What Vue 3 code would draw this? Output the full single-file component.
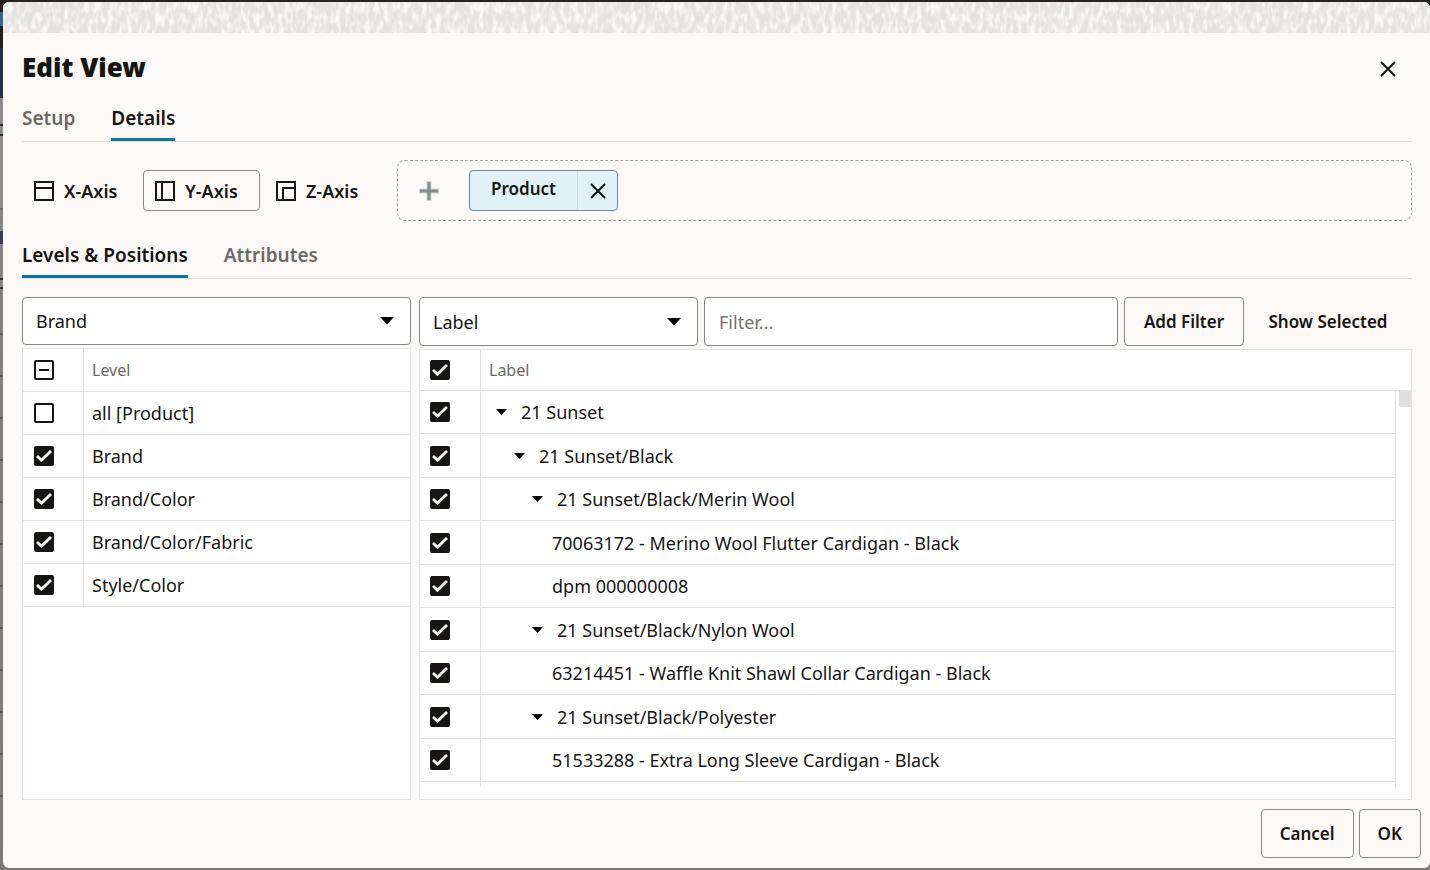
<script setup>
import { ref } from 'vue'

const levels = ref([
  { name: 'all [Product]', checked: false },
  { name: 'Brand', checked: true },
  { name: 'Brand/Color', checked: true },
  { name: 'Brand/Color/Fabric', checked: true },
  { name: 'Style/Color', checked: true }
])

const positions = ref([
  { name: '21 Sunset', kind: 'd1', checked: true },
  { name: '21 Sunset/Black', kind: 'd2', checked: true },
  { name: '21 Sunset/Black/Merin Wool', kind: 'd3', checked: true },
  { name: '70063172 - Merino Wool Flutter Cardigan - Black', kind: 'leaf', checked: true },
  { name: 'dpm 000000008', kind: 'leaf', checked: true },
  { name: '21 Sunset/Black/Nylon Wool', kind: 'd3', checked: true },
  { name: '63214451 - Waffle Knit Shawl Collar Cardigan - Black', kind: 'leaf', checked: true },
  { name: '21 Sunset/Black/Polyester', kind: 'd3', checked: true },
  { name: '51533288 - Extra Long Sleeve Cardigan - Black', kind: 'leaf', checked: true }
])

const axes = [
  { id: 'X', label: 'X-Axis', path: 'M1 1H19V19H1ZM1 7H19' },
  { id: 'Y', label: 'Y-Axis', path: 'M1 1H19V19H1ZM7 1V19' },
  { id: 'Z', label: 'Z-Axis', path: 'M1 1H19V19H1ZM7 19V7H19' }
]
const axis = ref('Y')
const allPositions = ref(true)
const filter = ref('')
</script>

<template>
  <div class="backdrop">
    <div class="dialog" role="dialog" aria-labelledby="dialog-title">
      <svg class="texture" aria-hidden="true">
        <filter id="weave" x="0" y="0" width="100%" height="100%">
          <feTurbulence type="fractalNoise" baseFrequency="0.21 0.09" numOctaves="2" seed="8" />
          <feColorMatrix values="0 0 0 0 1  0 0 0 0 1  0 0 0 0 0.99  3 0 0 0 -1.2" />
        </filter>
        <rect width="100%" height="100%" fill="#e4e3e1" />
        <rect width="100%" height="100%" filter="url(#weave)" opacity="0.75" />
      </svg>

      <div class="content">
        <header class="head">
          <h1 id="dialog-title">Edit View</h1>
          <button class="icon-btn" type="button" aria-label="Close">
            <svg width="16" height="16" viewBox="0 0 16 16"><path d="M1 1L15 15M15 1L1 15" /></svg>
          </button>
        </header>

        <nav class="tabs">
          <button class="tab" type="button">Setup</button>
          <button class="tab active" type="button">Details</button>
        </nav>

        <div class="axis-row">
          <div class="axes">
            <button
              v-for="a in axes"
              :key="a.id"
              type="button"
              class="axis"
              :class="{ selected: axis === a.id }"
              @click="axis = a.id"
            >
              <svg width="20" height="20" viewBox="0 0 20 20"><path :d="a.path" /></svg>
              <span>{{ a.label }}</span>
            </button>
          </div>
          <div class="drop">
            <button class="plus" type="button" aria-label="Add dimension">
              <svg width="20" height="20" viewBox="0 0 20 20">
                <path class="halo" d="M10 0V20M0 10H20" />
                <path d="M10 1V19M1 10H19" />
              </svg>
            </button>
            <div class="chip">
              <span class="chip-name">Product</span>
              <button class="chip-x" type="button" aria-label="Remove Product">
                <svg width="16" height="16" viewBox="0 0 16 16"><path d="M1 1L15 15M15 1L1 15" /></svg>
              </button>
            </div>
          </div>
        </div>

        <nav class="tabs sub">
          <button class="tab active" type="button">Levels &amp; Positions</button>
          <button class="tab" type="button">Attributes</button>
        </nav>

        <div class="panels">
          <section class="panel">
            <div class="select-wrap level-select">
              <select aria-label="Level"><option>Brand</option></select>
              <svg width="14" height="8" viewBox="0 0 14 8"><path d="M0 0H14L7 7.500Z" /></svg>
            </div>
            <div class="box levels">
              <table>
                <thead>
                  <tr>
                    <th class="tick"><input type="checkbox" class="mixed" aria-label="Select all levels" /></th>
                    <th>Level</th>
                  </tr>
                </thead>
                <tbody>
                  <tr v-for="l in levels" :key="l.name">
                    <td class="tick"><input v-model="l.checked" type="checkbox" :aria-label="l.name" /></td>
                    <td>{{ l.name }}</td>
                  </tr>
                </tbody>
              </table>
            </div>
          </section>

          <section class="panel">
            <div class="filters">
              <div class="select-wrap label-select">
                <select aria-label="Filter field"><option>Label</option></select>
                <svg width="14" height="8" viewBox="0 0 14 8"><path d="M0 0H14L7 7.500Z" /></svg>
              </div>
              <input v-model="filter" class="filter" type="text" placeholder="Filter..." aria-label="Filter" />
              <button class="btn add" type="button">Add Filter</button>
              <button class="btn plain" type="button">Show Selected</button>
            </div>
            <div class="box positions">
              <div class="scroll">
                <table>
                  <thead>
                    <tr>
                      <th class="tick">
                        <input v-model="allPositions" type="checkbox" aria-label="Select all positions" />
                      </th>
                      <th>Label</th>
                      <th class="gutter"></th>
                    </tr>
                  </thead>
                  <tbody>
                    <tr v-for="p in positions" :key="p.name">
                      <td class="tick"><input v-model="p.checked" type="checkbox" :aria-label="p.name" /></td>
                      <td class="name">
                        <div class="node" :class="p.kind">
                          <svg v-if="p.kind !== 'leaf'" width="11" height="6" viewBox="0 0 11 6">
                            <path d="M0 0H11L5.500 6Z" />
                          </svg>
                          <span>{{ p.name }}</span>
                        </div>
                      </td>
                      <td class="gutter"></td>
                    </tr>
                    <tr class="stub">
                      <td class="tick"></td>
                      <td class="name"></td>
                      <td class="gutter"></td>
                    </tr>
                  </tbody>
                </table>
              </div>
              <div class="thumb"></div>
            </div>
          </section>
        </div>
      </div>

      <footer class="foot">
        <button class="btn" type="button">Cancel</button>
        <button class="btn" type="button">OK</button>
      </footer>
    </div>
  </div>
</template>

<style>
body {
  margin: 0;
}
</style>

<style scoped>
.backdrop {
  box-sizing: border-box;
  display: flex;
  min-height: 100vh;
  padding: 2px 0 2px 3px;
  font-family: "Noto Sans", "Open Sans", sans-serif;
  font-size: 18px;
  color: #161513;
  background:
    linear-gradient(#272220, #272220) 0 0 / 100% 12px no-repeat,
    linear-gradient(
      #221f1d 0 12px, #2c6c8a 12px 26px, #221f1d 26px 48px, #2d2f42 48px 98px, #8b8b8b 98px 124px,
      #2b2b2b 124px 126px, #8b8b8b 126px 134px, #2b2b2b 134px 136px, #8b8b8b 136px 208px,
      #6f6d6b 208px 210px, #858585 210px 231px, #3a4052 231px 244px, #858585 244px 278px,
      #333 278px 280px, #858585 280px 287px, #333 287px 289px, transparent 289px
    ) 0 0 / 3px 100% no-repeat,
    repeating-linear-gradient(transparent 0 36px, #5c5c5c 36px 38px, transparent 38px 42px) 0 297px / 3px 504px no-repeat,
    linear-gradient(#858585, #7a7a7a) 0 0 / 3px 100% no-repeat,
    #7c7b7a;
}
*,
*::before,
*::after {
  box-sizing: border-box;
}
button,
input,
select {
  margin: 0;
  font: inherit;
  color: inherit;
}
button {
  padding: 0;
  border: 0;
  background: none;
  cursor: pointer;
}
svg {
  display: block;
  flex: none;
}
.dialog {
  display: flex;
  flex: 1;
  flex-direction: column;
  min-width: 0;
  overflow: hidden;
  border-radius: 6px;
  background: #faf9f7;
}
.texture {
  width: 100%;
  height: 31px;
}
.content {
  display: flex;
  flex: 1;
  flex-direction: column;
  padding: 0 18px 0 19px;
}
.head {
  display: flex;
  align-items: center;
  justify-content: space-between;
  height: 68px;
}
h1 {
  margin: 0;
  font-size: 26px;
  font-weight: 900;
  line-height: 36px;
}
.icon-btn {
  display: grid;
  place-items: center;
  width: 48px;
  height: 48px;
  padding-top: 4px;
}
.icon-btn path,
.chip-x path {
  fill: none;
  stroke: #161513;
  stroke-width: 2;
}
.tabs {
  display: flex;
  gap: 36px;
  border-bottom: 1px solid #e0dfdd;
}
.tab {
  padding-bottom: 3px;
  border-bottom: 3px solid transparent;
  font-size: 19px;
  font-weight: 600;
  line-height: 34px;
  color: #6b6966;
}
.tab.active {
  border-bottom-color: #11749b;
  color: #161513;
}
.tabs.sub {
  margin-top: 17px;
}
.axis-row {
  display: flex;
  align-items: center;
  gap: 16px;
  margin-top: 18px;
}
.axes {
  display: flex;
  gap: 4px;
}
.axis {
  display: flex;
  align-items: center;
  gap: 10px;
  width: 117px;
  height: 41px;
  padding: 0 11px;
  border: 1px solid transparent;
  border-radius: 4px;
  font-weight: 600;
}
.axis.selected {
  border-color: #8b8986;
}
.axis path {
  fill: none;
  stroke: #161513;
  stroke-width: 2;
}
.drop {
  display: flex;
  flex: 1;
  align-items: center;
  height: 61px;
  padding-left: 21px;
  border: 1px dashed #a3a19f;
  border-radius: 8px;
}
.plus path {
  fill: none;
  stroke: #85898b;
  stroke-width: 3;
}
.plus .halo {
  stroke: #d2d3d3;
  stroke-width: 5;
}
.chip {
  display: flex;
  height: 41px;
  margin-left: 30px;
  overflow: hidden;
  border: 1px solid #7b8589;
  border-radius: 4px;
  background: #e0f1f8;
}
.chip-name {
  width: 107px;
  font-size: 17px;
  font-weight: 600;
  line-height: 36px;
  text-align: center;
}
.chip-x {
  display: grid;
  place-items: center;
  width: 40px;
  border-left: 1px solid #d5dcdf;
}
.panels {
  display: grid;
  flex: 1;
  grid-template-columns: 389fr 993fr;
  gap: 8px;
  margin-top: 18px;
}
.panel {
  display: flex;
  flex-direction: column;
  gap: 3px;
  min-width: 0;
}
.select-wrap {
  position: relative;
  height: 49px;
}
.level-select {
  height: 48px;
}
.label-select {
  flex: 0 1 279px;
}
.select-wrap svg {
  position: absolute;
  top: 50%;
  right: 17px;
  margin-top: -4px;
  pointer-events: none;
}
select {
  appearance: none;
  width: 100%;
  height: 100%;
  padding: 0 40px 0 13px;
  border: 1px solid #8b8986;
  border-radius: 4px;
  background: #fff;
}
.filters {
  display: flex;
  gap: 6px;
}
.filter {
  flex: 1;
  min-width: 0;
  height: 49px;
  padding: 0 14px;
  border: 1px solid #8b8986;
  border-radius: 4px;
  background: #fff;
}
.filter::placeholder {
  color: #75726f;
  opacity: 1;
}
.btn {
  height: 49px;
  padding: 0 18px;
  border: 1px solid #8b8986;
  border-radius: 4px;
  font-size: 17px;
  font-weight: 600;
  white-space: nowrap;
}
.btn.add {
  width: 120px;
  padding: 0;
}
.btn.plain {
  width: 162px;
  padding: 0 6px 0 0;
  border-color: transparent;
}
.box {
  position: relative;
  flex: 1;
  border: 1px solid #e5e4e2;
  background: #fff;
}
.scroll {
  overflow: hidden;
}
table {
  width: 100%;
  border-collapse: separate;
  border-spacing: 0;
  table-layout: fixed;
}
th,
td {
  height: 43px;
  padding: 0 0 0 8px;
  border-bottom: 1px solid #e5e4e2;
  font-weight: 400;
  text-align: left;
}
th {
  font-size: 16px;
  color: #6b6966;
}
.tick {
  width: 61px;
  padding: 0 0 0 11px;
  border-right: 1px solid #e5e4e2;
}
.positions th {
  height: 41px;
}
.positions tr:nth-child(even) td {
  height: 44px;
}
.positions tr.stub td {
  height: 5px;
  border-bottom: 0;
}
.positions .name {
  border-right: 1px solid #e5e4e2;
}
.positions .tick {
  padding-left: 10px;
}
.positions td.gutter {
  border-bottom: 0;
}
.gutter {
  width: 15px;
  padding: 0;
}
.thumb {
  position: absolute;
  top: 41px;
  right: 0;
  width: 12px;
  height: 16px;
  background: #e0dfdd;
}
.node {
  display: flex;
  align-items: center;
  gap: 14px;
}
.d1 {
  padding-left: 7px;
}
.d2 {
  padding-left: 25px;
}
.d3 {
  padding-left: 43px;
}
.leaf {
  padding-left: 63px;
}
input[type="checkbox"] {
  display: block;
  appearance: none;
  width: 20px;
  height: 20px;
  border: 2px solid #161513;
  border-radius: 2px;
  background: #fff center / 20px 20px no-repeat;
}
input[type="checkbox"]:checked {
  background-color: #161513;
  background-image: url("data:image/svg+xml,%3Csvg xmlns='http://www.w3.org/2000/svg' viewBox='0 0 20 20'%3E%3Cpath d='M3 10L7.500 14.200L17 5' fill='none' stroke='white' stroke-width='2.800'/%3E%3C/svg%3E");
}
input.mixed {
  background-image: url("data:image/svg+xml,%3Csvg xmlns='http://www.w3.org/2000/svg' viewBox='0 0 20 20'%3E%3Cpath d='M5 10H15' fill='none' stroke='%23161513' stroke-width='2'/%3E%3C/svg%3E");
}
.foot {
  display: flex;
  justify-content: flex-end;
  gap: 5px;
  padding: 9px 9px 10px;
}
</style>
